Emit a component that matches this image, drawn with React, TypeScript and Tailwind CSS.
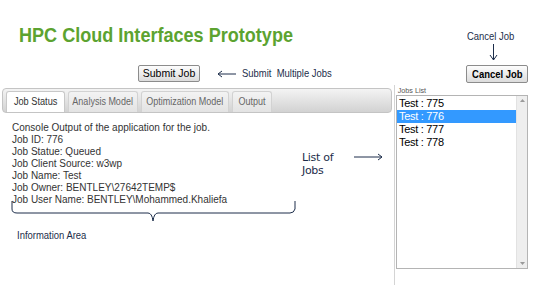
import React from "react";

const navy = "text-[#1c2d4a]";

export default function App() {
  const jobs = ["Test : 775", "Test : 776", "Test : 777", "Test : 778"];
  const lines = [
    "Console Output of the application for the job.",
    "Job ID: 776",
    "Job Statue: Queued",
    "Job Client Source: w3wp",
    "Job Name: Test",
    "Job Owner: BENTLEY\\27642TEMP$",
    "Job User Name: BENTLEY\\Mohammed.Khaliefa",
  ];
  const tabs = [
    { t: "Analysis Model", w: "w-[70px]" },
    { t: "Optimization Model", w: "w-[88px]" },
    { t: "Output", w: "w-[40px]" },
  ];
  return (
    <div className="relative w-[535px] h-[300px] bg-white overflow-hidden font-['Liberation_Sans',Arial,sans-serif]">
      {/* Header */}
      <div className="relative h-[86px]">
        <div className="pt-[24px] pl-[19px]">
          <div className="origin-left scale-x-[0.86] whitespace-nowrap text-[21px] leading-none font-bold text-[#5ca330]">
            HPC Cloud Interfaces Prototype
          </div>
        </div>

        {/* Submit button row */}
        <button className="absolute left-[138px] top-[65px] w-[62px] h-[17px] border border-[#8c8c8c] rounded-[2px] bg-gradient-to-b from-[#fdfdfd] to-[#dcdcdc] text-[10.5px] leading-none text-black whitespace-nowrap flex items-center justify-center">
          Submit Job
        </button>
        <svg className="absolute left-[217px] top-[70px]" width="20" height="8" viewBox="0 0 20 8">
          <path d="M1 4 H19 M1 4 L5 1 M1 4 L5 7" stroke="#1c2d4a" strokeWidth="1" fill="none" />
        </svg>
        <div className={`absolute left-[242px] top-[68px] text-[10.5px] leading-none whitespace-nowrap ${navy} origin-left scale-x-[0.9]`}>
          Submit&nbsp; Multiple Jobs
        </div>

        {/* Cancel annotation */}
        <div className={`absolute left-[467px] top-[31px] text-[10.5px] leading-none whitespace-nowrap ${navy} origin-left scale-x-[0.9]`}>
          Cancel Job
        </div>
        <svg className="absolute left-[489px] top-[44px]" width="9" height="17" viewBox="0 0 9 17">
          <path d="M4.5 0 V16 M4.5 16 L1 11 M4.5 16 L8 11" stroke="#1c2d4a" strokeWidth="1" fill="none" />
        </svg>
        <button className="absolute left-[466px] top-[65px] w-[62px] h-[18px] border border-[#8c8c8c] rounded-[2px] bg-gradient-to-b from-[#fdfdfd] to-[#dcdcdc] text-[11px] leading-none text-black whitespace-nowrap flex items-center justify-center">
          <span className="inline-block font-bold scale-x-[0.86]">Cancel Job</span>
        </button>
      </div>

      {/* Main */}
      <div className="flex">
        {/* Left panel */}
        <div className="relative w-[394px] h-[214px]">
          <div className="mt-[2px] ml-[2px] w-[390px] h-[25px] rounded-[4px] border border-[#c4c4c4] bg-gradient-to-b from-[#f4f4f4] to-[#d2d2d2] flex items-end pl-[3px] gap-[3px] text-[10px] leading-none whitespace-nowrap">
            <div className="h-[21px] w-[59px] flex items-center justify-center bg-white border border-b-0 border-[#c8c8c8] rounded-t-[3px] text-[#333]">
              <span className="inline-block scale-x-[0.92]">Job Status</span>
            </div>
            {tabs.map((tb) => (
              <div
                key={tb.t}
                className={`h-[21px] ${tb.w} flex items-center justify-center bg-gradient-to-b from-[#f3f3f3] to-[#e3e3e3] border border-b-0 border-[#d2d2d2] rounded-t-[3px] text-[#666]`}
              >
                <span className="inline-block scale-x-[0.9]">{tb.t}</span>
              </div>
            ))}
          </div>

          <div className="pl-[12px] pt-[9px] text-[10px] leading-[12px] text-[#333] whitespace-nowrap">
            {lines.map((l) => (
              <div key={l}>{l}</div>
            ))}
          </div>

          {/* brace */}
          <svg className="absolute left-[9px] top-[115px]" width="290" height="24" viewBox="0 0 290 24">
            <path
              d="M3 0 V8 Q3 12 8 12 H139 Q143 12 144 20 Q145 12 149 12 H281 Q285 12 286 8 V0"
              stroke="#1c2d4a"
              strokeWidth="1"
              fill="none"
            />
          </svg>
          <div className={`absolute left-[17px] top-[144px] text-[10.5px] leading-none whitespace-nowrap ${navy} origin-left scale-x-[0.9]`}>
            Information Area
          </div>

          {/* list of jobs annotation */}
          <div className={`absolute left-[302px] top-[65px] font-['DejaVu_Sans',sans-serif] text-[11px] leading-[13px] tracking-[-0.3px] ${navy}`}>
            List of
            <br />
            Jobs
          </div>
          <svg className="absolute left-[354px] top-[67px]" width="29" height="8" viewBox="0 0 29 8">
            <path d="M0 4 H28 M28 4 L24 1 M28 4 L24 7" stroke="#1c2d4a" strokeWidth="1" fill="none" />
          </svg>
        </div>

        {/* Right panel */}
        <div className="w-[141px] h-[200px] border-l border-[#d4d4d4] -mt-[1px]">
          <div className="pl-[3px] pt-[1px] text-[8px] leading-[9px] text-[#555] origin-left scale-x-[0.9]">Jobs List</div>
          <div className="ml-[1px] w-[132px] h-[174px] border border-[#b4b4b4] flex">
            <div className="flex-1 pt-[1px] text-[11px] leading-[13px] tracking-[-0.3px] text-black">
              {jobs.map((j, i) => (
                <div key={j} className={i === 1 ? "bg-[#3399ff] text-white pl-[2px]" : "pl-[2px]"}>
                  {j}
                </div>
              ))}
            </div>
            <div className="w-[11px] bg-[#eeeeee] border-l border-[#e2e2e2] flex flex-col items-center justify-between py-[3px]">
              <svg width="5" height="3" viewBox="0 0 5 3"><path d="M0 3 L2.5 0 L5 3Z" fill="#9a9a9a" /></svg>
              <svg width="5" height="3" viewBox="0 0 5 3"><path d="M0 0 L2.5 3 L5 0Z" fill="#9a9a9a" /></svg>
            </div>
          </div>
        </div>
      </div>
    </div>
  );
}
